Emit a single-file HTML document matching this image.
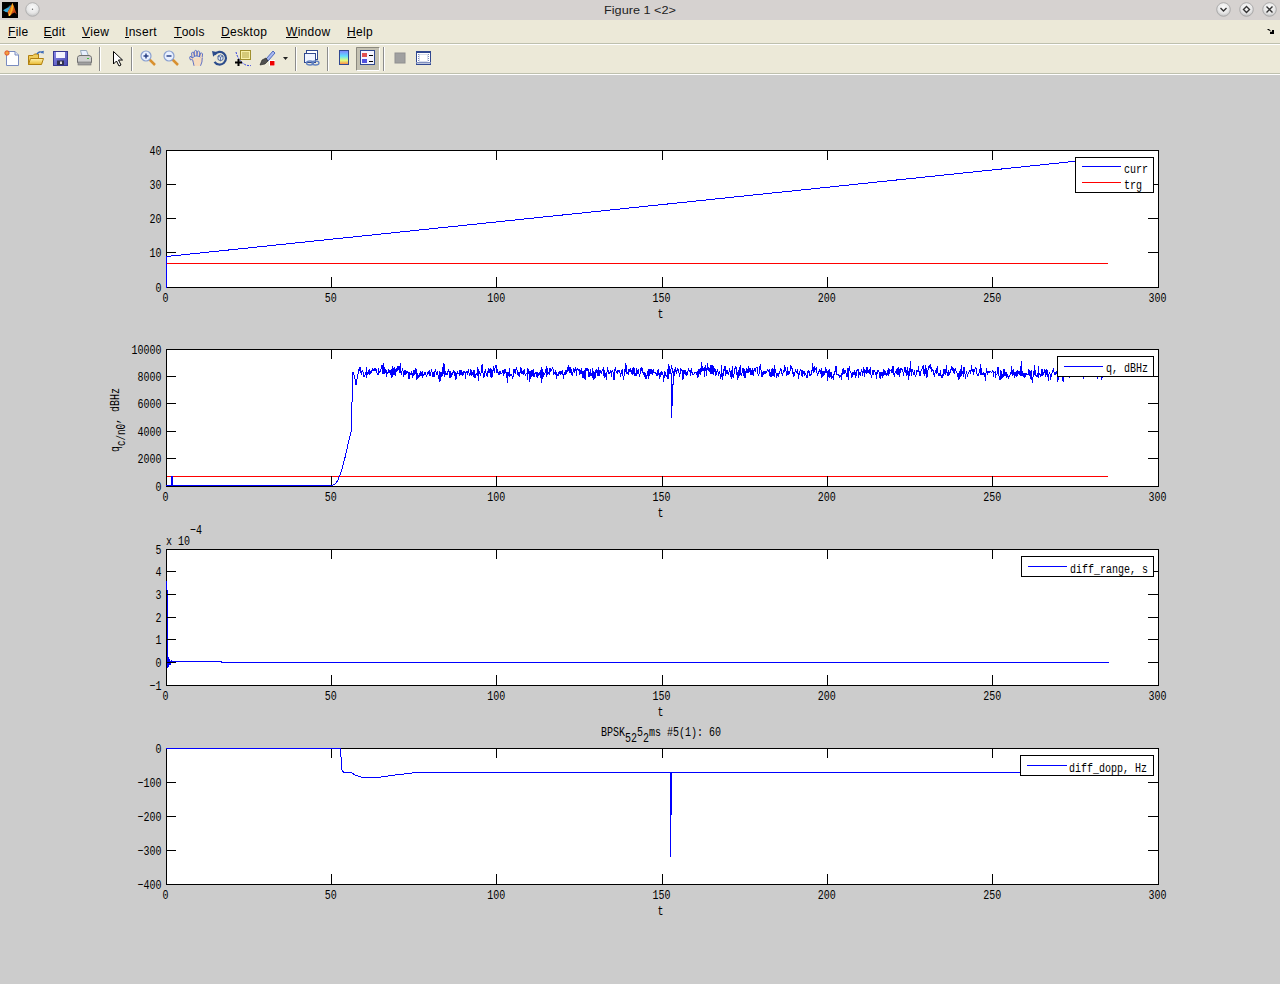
<!DOCTYPE html><html><head><meta charset="utf-8"><style>
*{margin:0;padding:0;box-sizing:border-box}
html,body{width:1280px;height:984px;overflow:hidden;background:#cccccc;font-family:"Liberation Sans",sans-serif}
#title{position:absolute;left:0;top:0;width:1280px;height:20px;background:#d6d2d0}
#menu{position:absolute;left:0;top:20px;width:1280px;height:23px;background:#ece9d8}
#menuline{position:absolute;left:0;top:43px;width:1280px;height:1px;background:#bec0ae}
#menuline2{position:absolute;left:0;top:44px;width:1280px;height:1px;background:#ffffff}
#tool{position:absolute;left:0;top:45px;width:1280px;height:28px;background:#ece9d8}
#toolline{position:absolute;left:0;top:73px;width:1280px;height:1px;background:#bec0ae}
#toolline2{position:absolute;left:0;top:74px;width:1280px;height:1px;background:#ffffff}
.mi{position:absolute;top:25px;font-size:12px;letter-spacing:0.3px;color:#000;line-height:14px;white-space:nowrap}
.mi u{text-decoration:none;position:relative}.mi u:after{content:'';position:absolute;left:0;right:0;top:12px;height:1px;background:#000}
svg{position:absolute;left:0;top:0}
</style></head><body>
<div id="title"></div><div id="menu"></div><div id="menuline"></div><div id="menuline2"></div><div id="tool"></div><div id="toolline"></div><div id="toolline2"></div>
<div class="mi" style="left:8px"><u>F</u>ile</div>
<div class="mi" style="left:43.5px"><u>E</u>dit</div>
<div class="mi" style="left:82px"><u>V</u>iew</div>
<div class="mi" style="left:125px"><u>I</u>nsert</div>
<div class="mi" style="left:174px"><u>T</u>ools</div>
<div class="mi" style="left:221px"><u>D</u>esktop</div>
<div class="mi" style="left:286px"><u>W</u>indow</div>
<div class="mi" style="left:347px"><u>H</u>elp</div>
<svg width="1280" height="984" viewBox="0 0 1280 984" font-family='"Liberation Sans", sans-serif'><defs><radialGradient id="btn" cx="50%" cy="35%" r="60%"><stop offset="0" stop-color="#fafafa"/><stop offset="0.7" stop-color="#e6e6e6"/><stop offset="1" stop-color="#c8c8c8"/></radialGradient><linearGradient id="cbar" x1="0" y1="0" x2="0" y2="1"><stop offset="0" stop-color="#8080ff"/><stop offset="0.4" stop-color="#60e0ff"/><stop offset="0.7" stop-color="#e0ff80"/><stop offset="1" stop-color="#ff8040"/></linearGradient></defs><rect x="2" y="2" width="16" height="16" fill="#000"/><linearGradient id="mlo" x1="0" y1="0" x2="1" y2="1"><stop offset="0" stop-color="#ffd040"/><stop offset="0.45" stop-color="#e86818"/><stop offset="1" stop-color="#a02010"/></linearGradient><path d="M3 10.3 L6 8.6 L8 7.4 L10.2 5.3 L11 6.2 L9.2 9.2 L7.6 12.2 L5.6 12 Z" fill="#38a8dc"/><path d="M6 8.6 L8 7.4 L10.2 5.3 L11 6.2 L9 7.5 Z" fill="#206a98"/><path d="M7.6 12.2 L9.2 9.2 L11 6.2 L12.3 3 L13.6 5.5 L15 9.6 L16.8 14.4 L14.8 12.6 L12.4 13.6 L10 16 L8.6 15.4 Z" fill="url(#mlo)"/><path d="M12.3 3 L13.3 6.5 L12.6 10.5 L11.2 13.4 L9.6 16 L8.6 15.4 L10.2 12 L11.4 7.5 Z" fill="#f8b020"/><path d="M8.6 15.4 L9.6 16 L10.6 14.2 L9.4 13.6 Z" fill="#ffe060"/><circle cx="32.5" cy="9.5" r="6.8" fill="url(#btn)" stroke="#a8a8a8" stroke-width="0.8"/><circle cx="32.5" cy="9.2" r="0.7" fill="#666"/><text x="640" y="13.5" font-size="11" text-anchor="middle" fill="#222" textLength="72" lengthAdjust="spacingAndGlyphs">Figure 1 &lt;2&gt;</text><circle cx="1223.5" cy="9.5" r="6.8" fill="url(#btn)" stroke="#a0a0a0" stroke-width="0.8"/><circle cx="1246.5" cy="9.5" r="6.8" fill="url(#btn)" stroke="#a0a0a0" stroke-width="0.8"/><circle cx="1269.5" cy="9.5" r="6.8" fill="url(#btn)" stroke="#a0a0a0" stroke-width="0.8"/><path d="M1220.5 8 L1223.5 11 L1226.5 8" fill="none" stroke="#333" stroke-width="1.4"/><path d="M1246.5 6.5 L1249.5 9.5 L1246.5 12.5 L1243.5 9.5 Z" fill="none" stroke="#333" stroke-width="1.4"/><path d="M1266.5 6.5 L1272.5 12.5 M1272.5 6.5 L1266.5 12.5" fill="none" stroke="#333" stroke-width="1.4"/><path d="M1267 29 L1269 29 L1272 32 L1272 30 L1274 30 L1274 34 L1270 34 L1270 32 L1272 32 L1268 30 Z" fill="#000"/><rect x="99" y="47" width="1" height="24" fill="#8c8c8c"/><rect x="100" y="47" width="1" height="24" fill="#fff"/><rect x="131" y="47" width="1" height="24" fill="#8c8c8c"/><rect x="132" y="47" width="1" height="24" fill="#fff"/><rect x="295" y="47" width="1" height="24" fill="#8c8c8c"/><rect x="296" y="47" width="1" height="24" fill="#fff"/><rect x="327" y="47" width="1" height="24" fill="#8c8c8c"/><rect x="328" y="47" width="1" height="24" fill="#fff"/><rect x="383" y="47" width="1" height="24" fill="#8c8c8c"/><rect x="384" y="47" width="1" height="24" fill="#fff"/><rect x="356" y="47" width="24" height="24" fill="#c4c1b2"/><path d="M356.5 70.5 V47.5 H379.5" fill="none" stroke="#8c8a80"/><path d="M356.5 70.5 H379.5 V47.5" fill="none" stroke="#fff"/><path d="M6.5 51.5 H15 L18.5 55 V65.5 H6.5 Z" fill="#fff" stroke="#7a8cc0"/><path d="M15 51.5 V55 H18.5" fill="#dfe6f5" stroke="#7a8cc0"/><circle cx="7" cy="53" r="2.2" fill="#f0a040" stroke="#e04020" stroke-width="0.8"/><linearGradient id="fold" x1="0" y1="0" x2="0" y2="1"><stop offset="0" stop-color="#fff4b0"/><stop offset="1" stop-color="#e8b830"/></linearGradient><path d="M28.5 55.5 H33 L34.5 54 H38.5 V64.5 H28.5 Z" fill="#f0cc58" stroke="#b08010"/><path d="M28.5 64.5 L30.5 58.5 H43.5 L41.5 64.5 Z" fill="url(#fold)" stroke="#b08010"/><path d="M37 54 Q39.5 50.5 42.5 53" fill="none" stroke="#3868b8" stroke-width="1.3"/><path d="M41 51.5 L43.5 54 L43.8 50.8 Z" fill="#3868b8"/><linearGradient id="sav" x1="0" y1="0" x2="1" y2="1"><stop offset="0" stop-color="#8888e8"/><stop offset="1" stop-color="#4848b0"/></linearGradient><rect x="53.5" y="51.5" width="14" height="14" fill="url(#sav)" stroke="#383890"/><rect x="56" y="52" width="9" height="6" fill="#f4f4ff"/><rect x="57" y="60.5" width="7" height="4.5" fill="#303050"/><rect x="60" y="61.5" width="2" height="2.5" fill="#e0e0e0"/><path d="M80.5 50.5 L86.5 50.5 L88.5 56 L82 56 Z" fill="#e8f0ff" stroke="#8098b0" stroke-width="0.8"/><path d="M77.5 57.5 Q78 55.5 80 55.5 H89 Q91 55.5 91.5 57.5 V62.5 H77.5 Z" fill="#d0d0d0" stroke="#707070"/><rect x="78" y="62" width="13" height="3" fill="#a0a0a0" stroke="#707070" stroke-width="0.6"/><rect x="87" y="58" width="2" height="1" fill="#40c040"/><path d="M113.5 51.5 V64 L116.5 61 L119 66 L121 65 L118.5 60 L122.5 60 Z" fill="#fff" stroke="#000" stroke-width="1"/><line x1="149" y1="59" x2="155" y2="65" stroke="#d89030" stroke-width="2.5"/><circle cx="146" cy="56" r="5" fill="#e8f0ff" stroke="#8aa0d0" stroke-width="1.2"/><path d="M143.5 56 H148.5" stroke="#203880" stroke-width="1.4"/><path d="M146 53.5 V58.5" stroke="#203880" stroke-width="1.4"/><line x1="172" y1="59" x2="178" y2="65" stroke="#d89030" stroke-width="2.5"/><circle cx="169" cy="56" r="5" fill="#e8f0ff" stroke="#8aa0d0" stroke-width="1.2"/><path d="M166.5 56 H171.5" stroke="#203880" stroke-width="1.4"/><g fill="#f6dcc0" stroke="#3858c8" stroke-width="0.8"><path d="M190.5 60 Q189 57.5 190 56.5 Q191.2 56 192.3 58 L193 59 Z"/><path d="M192 58 L191.6 53 Q192.3 51.6 193.6 52.4 L194.6 56.5 Z"/><path d="M194.4 56 L194.3 51.3 Q195.3 49.8 196.6 50.8 L197.2 56 Z"/><path d="M197 56 L197.5 51.4 Q198.8 50.4 199.7 51.8 L199.6 56.5 Z"/><path d="M199.5 57 L200.6 53.2 Q201.9 52.6 202.6 53.8 L202 58.5 Z"/><path d="M191.5 58.5 L202.3 57 Q203.3 61 201.5 63.5 L200.5 66 L194 66 Q192.5 62.5 191.5 58.5 Z" stroke="none"/><path d="M192.5 59.5 Q193.5 63 194 65.8 M202.2 58 Q202.5 62 200.5 65.8"/></g><path d="M214.6 54.5 A6.3 6.3 0 1 1 214.5 61.8" fill="none" stroke="#2c4c8c" stroke-width="2.2"/><path d="M212 51 L217.5 52.2 L213.2 56.8 Z" fill="#2c4c8c"/><path d="M218 56 L220.5 54.8 L223 56 L223 59.5 L220.5 60.8 L218 59.5 Z" fill="#e4ecf8" stroke="#2c4c8c" stroke-width="0.8"/><path d="M218 56 L220.5 57.2 L223 56 M220.5 57.2 V60.8" fill="none" stroke="#2c4c8c" stroke-width="0.7"/><rect x="240.5" y="50.5" width="10" height="9" fill="#f8f0a8" stroke="#a09030"/><path d="M242 53 H249 M242 55 H249 M242 57 H249" stroke="#a09030" stroke-width="0.8"/><path d="M236 52 Q238 60 244 64 Q247 66 251 65.5" fill="none" stroke="#2030e0" stroke-width="0.9" stroke-dasharray="2 1"/><path d="M238.5 59 V66 M235 62.5 H242" stroke="#000" stroke-width="2"/><path d="M266 59 L273 51 L275 53 L268 61 Z" fill="#a8b8f0" stroke="#3050b0" stroke-width="0.8"/><path d="M260 65 L262 60 L266 58 L268 61 L265 64 Z" fill="#505050" stroke="#202020" stroke-width="0.6"/><rect x="269" y="60" width="6" height="6" fill="#fff"/><rect x="270" y="61" width="4.5" height="4.5" fill="#ee0000"/><path d="M283 57 H288 L285.5 60 Z" fill="#222"/><rect x="306.5" y="50.5" width="11" height="9" fill="#fff" stroke="#304890"/><rect x="304.5" y="53.5" width="11" height="9" fill="#f0f4ff" stroke="#304890"/><ellipse cx="310" cy="63" rx="3.5" ry="2" fill="none" stroke="#6080c0" stroke-width="1.3"/><ellipse cx="315.5" cy="63" rx="3.5" ry="2" fill="none" stroke="#6080c0" stroke-width="1.3"/><rect x="339.5" y="50.5" width="9" height="14" fill="url(#cbar)" stroke="#304890"/><rect x="360.5" y="50.5" width="14" height="14" fill="#f4f4ff" stroke="#304890"/><rect x="362" y="53" width="5" height="4" fill="#e05050"/><rect x="362" y="59" width="5" height="4" fill="#5050e0"/><path d="M369 55.5 H373 M369 61.5 H373" stroke="#000" stroke-width="1"/><rect x="395" y="53" width="10" height="10" fill="#a0a0a0" stroke="#909090"/><rect x="416.5" y="51.5" width="14" height="13" fill="#fff" stroke="#304890"/><rect x="416" y="51" width="15" height="2" fill="#304890"/><rect x="416" y="62" width="15" height="1.5" fill="#8090c0"/><path d="M418.5 54 V62 M428.5 54 V62" stroke="#8090c0" stroke-dasharray="1 1"/><rect x="419.5" y="54.5" width="8" height="7" fill="#fff" stroke="#c0c8e0" stroke-width="0.6"/><rect x="166" y="150" width="992" height="137" fill="#fff"/><path d="M166.5 287.5 L166.5 256.5 L1108.5 157.8" fill="none" stroke="#0000ff" stroke-width="1" shape-rendering="crispEdges" stroke-linejoin="miter"/><path d="M166 263.5 H1108" stroke="#ff0000" shape-rendering="crispEdges"/><path d="M166.5 150.5 H1158.5 V287.5 H166.5 Z M166.5 288 V277 M166.5 150 V160 M331.5 288 V277 M331.5 150 V160 M496.5 288 V277 M496.5 150 V160 M662.5 288 V277 M662.5 150 V160 M827.5 288 V277 M827.5 150 V160 M992.5 288 V277 M992.5 150 V160 M1158.5 288 V277 M1158.5 150 V160 M166 252.5 H176 M1159 252.5 H1148 M166 218.5 H176 M1159 218.5 H1148 M166 184.5 H176 M1159 184.5 H1148" fill="none" stroke="#000" stroke-width="1" shape-rendering="crispEdges"/><path d="M166.5 256 V288" stroke="#0000ff" shape-rendering="crispEdges"/><text x="165.5" y="302" font-family="Liberation Mono" font-size="13" text-anchor="middle" textLength="6" lengthAdjust="spacingAndGlyphs" >0</text><text x="330.8" y="302" font-family="Liberation Mono" font-size="13" text-anchor="middle" textLength="12" lengthAdjust="spacingAndGlyphs" >50</text><text x="496.2" y="302" font-family="Liberation Mono" font-size="13" text-anchor="middle" textLength="18" lengthAdjust="spacingAndGlyphs" >100</text><text x="661.5" y="302" font-family="Liberation Mono" font-size="13" text-anchor="middle" textLength="18" lengthAdjust="spacingAndGlyphs" >150</text><text x="826.8" y="302" font-family="Liberation Mono" font-size="13" text-anchor="middle" textLength="18" lengthAdjust="spacingAndGlyphs" >200</text><text x="992.2" y="302" font-family="Liberation Mono" font-size="13" text-anchor="middle" textLength="18" lengthAdjust="spacingAndGlyphs" >250</text><text x="1157.5" y="302" font-family="Liberation Mono" font-size="13" text-anchor="middle" textLength="18" lengthAdjust="spacingAndGlyphs" >300</text><text x="161.5" y="292" font-family="Liberation Mono" font-size="13" text-anchor="end" textLength="6" lengthAdjust="spacingAndGlyphs" >0</text><text x="161.5" y="257" font-family="Liberation Mono" font-size="13" text-anchor="end" textLength="12" lengthAdjust="spacingAndGlyphs" >10</text><text x="161.5" y="223" font-family="Liberation Mono" font-size="13" text-anchor="end" textLength="12" lengthAdjust="spacingAndGlyphs" >20</text><text x="161.5" y="189" font-family="Liberation Mono" font-size="13" text-anchor="end" textLength="12" lengthAdjust="spacingAndGlyphs" >30</text><text x="161.5" y="155" font-family="Liberation Mono" font-size="13" text-anchor="end" textLength="12" lengthAdjust="spacingAndGlyphs" >40</text><text x="660.5" y="318" font-family="Liberation Mono" font-size="12" text-anchor="middle" textLength="6" lengthAdjust="spacingAndGlyphs">t</text><rect x="1075.5" y="157.5" width="78" height="35" fill="#fff" stroke="#000" shape-rendering="crispEdges"/><path d="M1082 166.5 H1121" stroke="#0000ff" shape-rendering="crispEdges"/><text x="1124" y="173" font-family="Liberation Mono" font-size="12" textLength="24" lengthAdjust="spacingAndGlyphs">curr</text><path d="M1082 182.5 H1121" stroke="#ff0000" shape-rendering="crispEdges"/><text x="1124" y="189" font-family="Liberation Mono" font-size="12" textLength="18" lengthAdjust="spacingAndGlyphs">trg</text><rect x="166" y="349" width="992" height="137" fill="#fff"/><path d="M166 476.5 H1108" stroke="#ff0000" shape-rendering="crispEdges"/><path d="M166.5 485.5 L171.5 485.5 L171.5 476.5 L172.5 476.5 L172.5 485.5 L332.0 485.5 L335.0 484.0 L337.5 481.0 L341.0 472.5 L345.0 457.5 L349.0 440.0 L351.0 432.5 L352.0 402.5 L353.0 372.5 L354.5 376.0 L356.0 385.0 L358.0 374.0 L358.5 369.0 L359.1 370.5 L359.7 370.3 L360.0 367.3 L360.8 371.7 L361.2 373.7 L361.6 374.1 L362.1 370.2 L362.7 370.1 L363.5 373.8 L363.9 376.6 L364.6 376.9 L365.4 373.0 L366.1 373.6 L366.5 367.2 L366.8 378.3 L367.2 372.6 L367.9 375.2 L368.3 369.8 L368.6 372.4 L369.4 368.9 L369.8 375.0 L370.2 371.3 L370.9 373.8 L371.2 369.9 L371.7 372.6 L372.3 369.0 L373.0 368.6 L373.7 370.5 L374.5 369.0 L374.8 370.9 L375.2 367.9 L375.6 370.7 L376.2 368.7 L376.9 373.0 L377.4 373.4 L378.0 375.3 L378.8 368.3 L379.2 372.8 L379.8 372.6 L380.4 369.8 L380.7 370.5 L381.4 366.2 L381.9 365.0 L382.4 365.5 L383.0 374.4 L383.3 362.6 L384.0 373.7 L384.5 369.4 L384.8 368.1 L385.5 370.0 L385.9 370.7 L386.3 377.4 L386.8 369.7 L387.2 373.4 L388.0 373.5 L388.3 370.1 L389.0 369.7 L389.5 372.9 L390.1 370.5 L390.9 374.9 L391.6 369.0 L391.9 378.2 L392.3 372.9 L392.9 366.2 L393.5 375.0 L393.8 371.8 L394.3 374.8 L394.9 367.5 L395.6 375.8 L396.0 372.6 L396.5 367.7 L397.2 371.2 L397.9 366.3 L398.3 366.3 L398.9 369.1 L399.6 373.0 L400.2 362.9 L400.5 370.4 L401.0 372.5 L401.7 374.1 L402.3 368.2 L403.0 370.8 L403.8 376.5 L404.5 369.6 L405.1 375.3 L405.4 372.1 L405.8 370.5 L406.1 373.9 L406.7 370.6 L407.1 373.1 L407.9 371.5 L408.4 374.2 L409.1 379.3 L409.6 372.6 L410.0 373.1 L410.6 374.0 L411.1 374.8 L411.7 370.9 L412.5 377.6 L413.2 374.7 L413.6 373.0 L414.0 370.5 L414.8 375.0 L415.3 371.7 L415.9 368.7 L416.5 369.4 L416.9 379.9 L417.6 373.3 L418.0 375.5 L418.6 377.4 L418.9 375.4 L419.3 376.1 L419.7 374.1 L420.5 371.3 L421.0 376.2 L421.7 371.9 L422.3 377.8 L422.7 371.1 L423.0 376.3 L423.5 374.9 L424.2 374.2 L425.0 372.3 L425.8 375.0 L426.2 375.1 L426.6 375.8 L427.0 375.2 L427.5 373.7 L428.3 371.9 L428.9 373.6 L429.2 369.8 L430.0 376.4 L430.5 372.4 L431.0 371.7 L431.5 368.7 L432.1 372.7 L432.4 377.2 L433.2 371.6 L434.0 376.7 L434.5 373.4 L435.3 370.0 L436.0 372.4 L436.5 374.4 L436.9 374.4 L437.3 370.6 L437.9 373.3 L438.3 378.6 L438.9 375.8 L439.5 370.6 L439.9 382.3 L440.6 373.5 L441.1 372.0 L441.5 376.1 L442.1 375.8 L442.6 366.8 L442.9 369.0 L443.3 374.1 L443.8 364.0 L444.4 364.7 L444.9 376.8 L445.2 371.0 L445.7 371.2 L446.3 374.2 L446.9 374.6 L447.6 373.9 L448.2 369.7 L448.7 371.0 L449.2 371.6 L449.7 376.3 L450.2 378.1 L450.7 370.6 L451.4 376.8 L451.8 374.9 L452.3 372.4 L452.8 375.2 L453.1 372.3 L453.6 369.6 L454.1 373.6 L454.5 376.1 L454.9 372.4 L455.7 373.2 L456.0 379.5 L456.7 373.7 L457.4 372.3 L457.8 373.4 L458.1 373.7 L458.8 373.3 L459.4 371.9 L459.8 374.9 L460.4 374.6 L460.8 369.7 L461.5 372.6 L462.2 375.5 L462.8 373.1 L463.5 374.4 L463.9 372.1 L464.2 372.6 L464.9 370.7 L465.3 378.5 L466.0 372.2 L466.3 372.2 L467.1 371.2 L467.7 375.1 L468.5 368.7 L469.2 375.0 L469.9 375.5 L470.3 369.4 L470.6 375.2 L471.1 370.3 L471.6 371.4 L471.9 375.8 L472.5 372.2 L473.2 376.7 L473.7 371.3 L474.2 369.7 L474.9 378.4 L475.5 376.5 L475.9 374.6 L476.3 374.8 L476.6 373.2 L477.1 375.6 L477.7 367.4 L478.2 380.6 L478.6 369.5 L479.2 374.1 L479.7 370.9 L480.2 375.5 L480.7 374.6 L481.3 371.1 L482.1 364.4 L482.4 366.7 L483.0 372.7 L483.7 378.1 L484.4 375.7 L484.7 370.7 L485.4 373.3 L485.7 368.7 L486.2 375.8 L486.8 374.7 L487.5 376.2 L488.3 368.4 L488.7 372.0 L489.0 373.0 L489.5 371.1 L490.1 368.5 L490.5 377.1 L491.1 372.6 L491.6 369.0 L491.9 377.8 L492.5 372.9 L493.0 369.9 L493.4 365.9 L493.8 370.7 L494.6 372.7 L495.2 365.4 L496.0 365.2 L496.6 370.9 L497.1 372.8 L497.4 369.5 L497.9 371.7 L498.4 373.2 L499.1 374.8 L499.5 373.6 L500.2 370.7 L500.9 373.7 L501.6 373.8 L502.2 372.4 L503.0 370.4 L503.8 376.0 L504.2 371.8 L504.6 372.2 L505.0 369.5 L505.5 369.6 L506.0 373.3 L506.4 378.3 L506.8 374.0 L507.1 371.9 L507.7 383.0 L508.1 373.6 L508.4 372.0 L509.0 375.7 L509.4 368.4 L509.9 376.2 L510.5 375.6 L511.1 374.3 L511.8 374.6 L512.4 379.2 L513.0 377.1 L513.3 376.0 L513.9 369.3 L514.6 372.5 L515.0 369.4 L515.6 374.3 L516.3 367.3 L516.9 369.5 L517.3 372.2 L517.8 375.3 L518.5 371.7 L519.1 376.8 L519.9 373.3 L520.2 371.4 L521.0 367.6 L521.6 373.9 L522.1 373.9 L522.9 371.8 L523.5 373.5 L524.2 369.4 L525.0 373.6 L525.3 375.3 L526.0 373.9 L526.7 373.6 L527.1 372.7 L527.4 380.1 L527.9 368.2 L528.6 373.8 L529.2 370.6 L529.9 381.5 L530.5 371.2 L531.2 371.0 L531.8 377.3 L532.2 375.1 L532.7 371.9 L533.2 369.0 L533.7 376.6 L534.1 376.4 L534.8 374.2 L535.4 372.2 L536.1 372.3 L536.7 376.3 L537.0 376.0 L537.5 377.0 L537.8 371.8 L538.3 374.4 L539.0 375.5 L539.7 371.7 L540.4 377.9 L540.8 373.9 L541.2 367.2 L541.7 383.0 L542.4 369.2 L542.9 378.5 L543.4 372.0 L544.0 375.3 L544.3 374.7 L544.8 373.1 L545.2 372.6 L545.8 369.3 L546.3 376.9 L546.9 366.4 L547.6 375.4 L548.2 373.4 L548.8 374.0 L549.2 371.2 L549.5 375.1 L550.0 368.4 L550.8 371.5 L551.3 369.3 L551.7 369.5 L552.4 367.7 L552.9 368.3 L553.6 375.3 L554.0 373.5 L554.8 372.9 L555.3 370.5 L556.1 375.1 L556.4 378.5 L556.8 373.9 L557.3 374.9 L558.1 376.0 L558.7 372.8 L559.3 371.5 L559.7 372.5 L560.0 374.0 L560.4 371.2 L560.9 374.8 L561.3 371.4 L561.7 372.7 L562.4 371.5 L562.9 373.3 L563.5 379.4 L564.3 373.2 L564.7 371.8 L565.0 375.3 L565.6 371.6 L565.9 369.8 L566.6 373.8 L567.2 370.5 L567.7 368.3 L568.1 369.5 L568.5 365.3 L569.2 372.4 L569.6 372.5 L570.0 366.8 L570.4 372.4 L570.9 372.2 L571.4 369.0 L572.1 375.7 L572.9 373.4 L573.4 368.0 L574.1 369.6 L574.5 370.9 L575.0 369.2 L575.8 367.8 L576.4 376.4 L576.9 369.1 L577.3 369.1 L577.6 368.8 L578.2 370.9 L579.0 368.9 L579.8 374.9 L580.6 371.0 L581.2 369.4 L581.8 372.0 L582.4 378.1 L583.0 370.7 L583.6 374.8 L584.2 378.8 L584.9 369.8 L585.2 379.9 L585.6 375.2 L586.0 368.3 L586.3 368.2 L587.1 371.3 L587.6 367.8 L588.3 370.4 L589.0 376.4 L589.5 375.6 L589.9 372.8 L590.6 369.2 L590.9 376.4 L591.4 374.6 L591.9 374.7 L592.3 367.9 L592.9 377.3 L593.4 378.3 L593.9 370.6 L594.5 378.4 L595.3 377.0 L596.0 370.2 L596.3 373.0 L596.8 368.8 L597.5 373.5 L598.1 376.1 L598.7 366.9 L599.5 375.5 L600.2 371.9 L600.7 369.9 L601.1 373.0 L601.7 373.0 L602.4 369.5 L603.0 370.5 L603.3 366.7 L603.6 375.8 L604.0 369.9 L604.4 371.7 L604.9 377.7 L605.4 373.3 L606.0 373.4 L606.7 379.7 L607.2 367.5 L607.7 372.3 L608.4 370.3 L608.7 374.2 L609.3 371.7 L609.7 374.2 L610.1 372.2 L610.9 369.9 L611.4 376.5 L611.9 372.6 L612.4 371.3 L612.7 369.9 L613.2 373.0 L613.7 376.8 L614.0 380.3 L614.4 370.2 L614.8 370.3 L615.2 368.5 L615.6 367.8 L616.2 372.0 L616.6 372.3 L616.9 372.7 L617.3 371.8 L617.7 374.4 L618.3 370.0 L619.0 372.1 L619.7 370.1 L620.4 376.7 L621.1 373.9 L621.8 371.2 L622.5 368.8 L623.1 377.1 L623.5 379.6 L624.0 376.4 L624.4 368.7 L625.1 371.6 L625.8 363.2 L626.3 367.6 L626.9 372.9 L627.5 372.4 L628.2 374.1 L628.9 369.2 L629.3 371.1 L629.8 370.8 L630.2 367.6 L630.6 371.5 L631.1 371.4 L631.6 373.6 L632.4 367.7 L632.8 373.8 L633.3 373.3 L634.0 367.4 L634.3 372.8 L635.0 375.4 L635.3 373.2 L635.7 375.5 L636.1 375.5 L636.7 368.0 L637.2 374.1 L637.8 371.5 L638.2 368.8 L638.9 373.4 L639.7 375.7 L640.1 373.7 L640.8 369.8 L641.2 367.3 L642.0 371.1 L642.3 367.6 L643.1 373.2 L643.7 374.7 L644.0 372.0 L644.5 377.1 L644.9 375.5 L645.6 373.4 L646.0 378.7 L646.8 375.8 L647.6 374.6 L648.2 369.4 L648.5 379.2 L649.0 376.2 L649.5 371.9 L650.0 369.3 L650.6 372.2 L651.0 374.0 L651.4 368.9 L652.0 372.5 L652.3 371.8 L652.7 373.6 L653.2 372.4 L653.6 370.9 L654.3 372.5 L654.7 372.8 L655.3 372.6 L656.0 373.4 L656.6 374.2 L657.1 376.0 L657.5 370.5 L657.9 370.8 L658.6 370.1 L659.4 378.7 L660.1 371.7 L660.6 377.1 L661.2 370.8 L661.8 375.0 L662.6 372.0 L663.2 376.6 L663.8 382.4 L664.1 376.4 L664.6 370.8 L664.9 375.8 L665.3 375.1 L665.6 372.2 L666.4 376.9 L667.0 376.9 L667.4 368.9 L668.0 379.2 L668.6 365.8 L669.2 367.0 L669.9 373.7 L670.6 373.7 L670.9 369.9 L671.6 365.5 L672.1 369.0 L672.4 373.2 L672.8 370.5 L673.2 372.0 L673.5 375.4 L674.0 371.8 L674.4 375.6 L675.2 366.8 L675.6 369.4 L676.3 373.7 L676.6 371.2 L677.3 369.9 L677.9 368.2 L678.7 371.2 L679.1 373.0 L679.8 376.6 L680.5 368.2 L681.0 371.2 L681.5 370.7 L681.9 369.7 L682.3 371.0 L682.8 378.6 L683.6 377.7 L684.0 370.5 L684.7 374.0 L685.2 374.1 L685.8 370.2 L686.4 375.6 L686.7 375.5 L687.3 373.7 L687.8 371.8 L688.5 368.1 L689.3 371.2 L690.1 372.0 L690.4 376.1 L691.0 369.8 L691.7 369.0 L692.0 372.7 L692.3 373.0 L692.9 374.8 L693.5 374.5 L694.1 374.0 L694.5 372.5 L695.0 372.6 L695.7 372.1 L696.5 374.0 L697.2 371.5 L698.0 377.5 L698.5 374.1 L698.9 368.8 L699.6 371.9 L700.2 375.3 L700.8 372.8 L701.3 362.0 L701.9 371.5 L702.6 366.4 L703.3 369.8 L703.7 367.9 L704.5 376.9 L705.1 365.0 L705.7 365.2 L706.3 375.9 L706.8 371.0 L707.3 363.1 L707.9 370.1 L708.5 368.4 L709.2 372.2 L709.7 368.2 L710.5 374.3 L711.0 365.1 L711.5 373.0 L711.8 373.1 L712.2 365.2 L712.6 371.9 L713.3 374.9 L713.6 365.6 L714.2 368.7 L714.7 371.7 L715.4 368.9 L715.8 375.6 L716.6 373.9 L717.3 369.1 L717.7 369.4 L718.5 374.9 L719.1 374.0 L719.9 370.8 L720.2 378.9 L720.9 378.0 L721.5 372.4 L721.8 364.6 L722.2 379.7 L722.6 373.9 L723.3 376.3 L724.0 369.2 L724.4 369.9 L725.0 366.2 L725.7 374.1 L726.3 372.9 L726.8 370.6 L727.3 372.3 L727.7 369.8 L728.1 375.2 L728.6 372.2 L729.1 371.9 L729.8 368.3 L730.3 373.7 L730.9 376.5 L731.6 378.5 L732.2 365.7 L732.8 375.9 L733.4 378.1 L734.2 372.5 L734.5 371.6 L735.0 368.5 L735.6 366.7 L736.4 367.1 L736.9 374.0 L737.6 379.7 L738.1 370.3 L738.4 371.3 L738.8 377.8 L739.5 371.1 L740.2 365.0 L740.5 374.1 L740.9 374.2 L741.5 376.4 L742.1 372.0 L742.7 368.7 L743.0 368.0 L743.5 374.0 L743.9 375.2 L744.2 374.7 L744.7 368.8 L745.0 378.0 L745.6 372.0 L746.1 372.5 L746.8 367.7 L747.5 371.3 L748.3 373.1 L748.8 366.1 L749.3 370.5 L750.0 371.7 L750.4 374.7 L750.8 367.6 L751.5 374.3 L751.9 374.2 L752.5 367.7 L753.0 374.9 L753.5 375.0 L754.2 368.1 L754.6 370.7 L755.3 371.1 L755.8 368.9 L756.3 367.6 L757.0 367.2 L757.5 371.9 L758.2 374.9 L758.9 375.8 L759.5 367.8 L760.3 364.3 L760.9 368.0 L761.4 376.2 L762.1 376.5 L762.7 373.6 L763.4 370.9 L764.0 374.5 L764.3 373.0 L765.1 370.7 L765.6 373.9 L765.9 370.7 L766.3 372.3 L767.1 371.2 L767.5 369.4 L767.8 369.7 L768.4 372.2 L769.1 369.5 L769.4 375.7 L770.2 371.7 L770.6 374.6 L771.0 376.9 L771.3 373.8 L771.7 369.0 L772.0 374.4 L772.5 374.9 L772.8 369.2 L773.3 370.1 L774.1 376.5 L774.6 365.0 L775.0 373.4 L775.5 370.2 L775.9 370.9 L776.3 377.8 L776.9 376.6 L777.7 373.4 L778.2 376.7 L778.9 374.0 L779.4 371.9 L779.9 371.1 L780.6 368.9 L781.4 369.9 L781.8 373.3 L782.5 374.9 L782.8 375.1 L783.2 370.4 L783.8 372.8 L784.4 369.6 L784.7 365.5 L785.5 370.4 L785.9 369.9 L786.2 372.9 L786.8 376.0 L787.2 371.5 L787.6 367.5 L788.0 375.0 L788.6 370.9 L789.0 373.5 L789.4 371.2 L789.8 374.2 L790.5 364.6 L791.3 368.1 L791.9 366.1 L792.3 374.3 L792.9 371.6 L793.4 372.3 L793.8 375.7 L794.5 374.7 L795.0 372.5 L795.6 369.4 L796.1 371.6 L796.7 372.3 L797.4 369.2 L798.0 374.4 L798.4 372.9 L798.7 378.8 L799.2 372.4 L799.9 371.2 L800.7 369.7 L801.2 370.3 L801.9 375.3 L802.3 376.7 L802.9 370.5 L803.4 373.8 L804.1 371.4 L804.6 376.4 L805.2 373.9 L806.0 374.5 L806.5 377.7 L807.3 377.7 L807.6 372.1 L808.1 372.8 L808.9 370.6 L809.6 374.9 L810.2 374.2 L810.7 375.4 L811.2 375.0 L811.8 371.0 L812.1 370.5 L812.8 363.5 L813.4 372.3 L814.0 371.9 L814.5 366.0 L815.2 368.6 L815.8 370.2 L816.1 366.7 L816.9 373.0 L817.6 375.9 L818.3 371.9 L819.1 372.0 L819.8 369.5 L820.4 370.9 L821.0 373.4 L821.4 368.4 L821.9 378.2 L822.4 374.8 L823.0 371.0 L823.7 376.2 L824.3 371.4 L824.7 373.6 L825.4 372.7 L825.8 366.8 L826.2 372.9 L826.7 368.9 L827.2 373.0 L827.8 381.4 L828.2 373.3 L828.9 370.6 L829.2 369.0 L829.6 377.7 L830.3 375.8 L830.9 372.6 L831.3 372.8 L831.8 379.3 L832.4 375.8 L832.8 377.7 L833.5 379.0 L834.1 373.2 L834.5 374.0 L835.2 370.5 L836.0 365.6 L836.3 371.1 L836.9 374.3 L837.5 374.1 L838.2 374.7 L838.7 375.3 L839.5 376.2 L839.8 377.4 L840.4 376.2 L841.2 377.4 L841.5 379.9 L842.1 372.4 L842.4 374.8 L843.1 368.2 L843.8 373.3 L844.5 373.1 L845.1 369.8 L845.9 372.4 L846.4 375.3 L846.8 377.2 L847.4 368.4 L848.2 380.1 L848.7 374.7 L849.1 365.7 L849.9 370.4 L850.2 372.9 L850.9 372.1 L851.6 378.2 L852.1 372.4 L852.8 376.9 L853.2 373.6 L854.0 372.7 L854.3 369.8 L854.8 375.1 L855.1 372.5 L855.9 377.7 L856.2 373.5 L856.6 370.3 L857.3 370.1 L858.1 369.7 L858.4 378.0 L858.8 375.4 L859.2 375.1 L859.8 371.9 L860.1 374.5 L860.8 375.7 L861.1 370.6 L861.9 369.7 L862.4 375.9 L863.1 372.3 L863.9 366.9 L864.6 377.4 L865.0 373.0 L865.8 370.2 L866.4 374.1 L867.0 367.1 L867.4 370.3 L868.1 372.8 L868.9 370.2 L869.2 368.7 L869.6 374.4 L870.3 367.5 L870.9 375.1 L871.5 376.9 L872.0 375.5 L872.7 371.1 L873.0 369.9 L873.4 374.1 L873.7 374.3 L874.3 370.7 L874.8 370.3 L875.4 374.9 L876.1 373.1 L876.4 372.9 L876.8 379.0 L877.1 372.4 L877.9 370.8 L878.3 370.9 L879.0 371.8 L879.6 378.4 L879.9 375.3 L880.3 372.3 L880.7 379.1 L881.4 373.3 L882.0 372.0 L882.6 378.1 L883.3 374.1 L883.8 370.2 L884.4 371.3 L885.0 374.6 L885.7 372.3 L886.3 373.5 L886.6 375.6 L887.0 375.3 L887.6 370.1 L888.2 376.2 L888.7 368.3 L889.3 370.2 L889.7 373.5 L890.1 370.0 L890.9 370.1 L891.2 368.9 L891.9 373.3 L892.6 369.2 L892.9 365.9 L893.7 370.6 L894.2 377.0 L894.8 374.9 L895.2 371.3 L895.9 372.6 L896.3 373.7 L896.7 369.6 L897.4 368.7 L898.0 374.6 L898.3 367.3 L898.7 374.1 L899.3 375.2 L900.0 368.7 L900.5 373.1 L901.0 368.6 L901.5 368.8 L902.1 370.3 L902.8 369.6 L903.2 374.0 L903.5 375.7 L903.8 372.8 L904.2 371.7 L905.0 366.6 L905.4 373.0 L906.1 370.4 L906.8 374.7 L907.3 374.3 L907.7 366.6 L908.5 379.6 L909.0 371.6 L909.4 371.0 L909.8 376.4 L910.2 361.0 L910.7 368.6 L911.4 375.8 L911.7 369.9 L912.2 369.4 L912.9 371.8 L913.4 374.2 L914.1 374.4 L914.6 370.5 L915.1 375.7 L915.6 376.0 L916.3 373.6 L916.6 370.9 L917.4 370.9 L918.0 372.2 L918.3 367.1 L918.6 366.9 L919.3 373.1 L920.0 376.1 L920.6 371.7 L921.0 370.8 L921.6 369.1 L922.4 368.8 L923.1 365.5 L923.5 374.1 L924.1 369.3 L924.5 375.5 L925.0 373.9 L925.6 365.2 L926.3 370.8 L926.9 376.9 L927.5 376.5 L928.0 369.8 L928.4 365.6 L928.7 370.4 L929.3 365.2 L930.1 368.5 L930.7 364.0 L931.4 370.8 L932.0 371.4 L932.6 370.2 L932.9 369.6 L933.7 373.9 L934.3 375.7 L934.9 373.3 L935.4 370.2 L936.0 373.2 L936.4 373.6 L937.2 366.4 L937.7 372.4 L938.1 373.2 L938.5 375.9 L939.2 374.0 L939.6 374.7 L940.1 372.7 L940.5 370.4 L941.2 378.0 L941.9 375.5 L942.5 375.0 L942.9 378.2 L943.3 368.9 L943.7 374.5 L944.3 368.7 L944.7 372.1 L945.0 371.5 L945.4 374.6 L945.8 371.5 L946.4 365.4 L947.1 373.7 L947.4 376.0 L948.2 370.4 L948.8 376.4 L949.4 373.3 L950.1 372.6 L950.7 369.3 L951.2 369.6 L951.5 366.2 L952.2 371.4 L952.7 366.7 L953.1 368.2 L953.7 372.4 L954.2 372.8 L954.7 369.5 L955.1 370.6 L955.4 370.8 L955.7 368.0 L956.1 371.9 L956.6 372.7 L957.1 373.4 L957.8 376.8 L958.4 372.8 L958.7 380.1 L959.5 376.1 L960.3 368.7 L960.7 377.4 L961.1 375.5 L961.5 364.7 L962.1 371.7 L962.7 371.4 L963.4 377.1 L964.0 366.9 L964.7 370.3 L965.2 376.8 L965.6 378.5 L966.3 370.8 L966.9 373.9 L967.6 376.5 L968.2 372.6 L968.6 373.2 L969.4 370.9 L970.0 370.5 L970.8 373.5 L971.6 365.1 L972.3 371.0 L972.7 372.1 L973.0 368.6 L973.3 369.4 L973.7 374.5 L974.3 369.0 L974.8 369.2 L975.4 367.8 L976.2 368.9 L976.8 373.6 L977.5 376.3 L978.0 373.7 L978.4 374.8 L979.1 373.1 L979.6 370.1 L980.1 369.6 L980.4 363.6 L981.0 375.1 L981.7 368.5 L982.1 373.9 L982.8 374.6 L983.2 372.1 L983.8 374.6 L984.4 375.6 L984.8 373.5 L985.4 380.8 L985.8 374.8 L986.4 368.6 L986.9 370.7 L987.7 373.5 L988.3 371.6 L989.0 372.8 L989.6 372.0 L990.2 371.4 L990.8 371.8 L991.4 372.3 L991.9 372.3 L992.4 370.5 L993.0 371.3 L993.5 377.0 L994.0 372.7 L994.7 372.7 L995.2 371.1 L995.6 377.5 L996.1 373.9 L996.8 374.7 L997.3 373.6 L998.0 366.8 L998.5 373.0 L999.1 376.5 L999.5 379.0 L1000.2 379.3 L1000.7 371.6 L1001.0 370.5 L1001.8 378.7 L1002.6 375.3 L1003.3 377.3 L1004.0 369.0 L1004.3 372.4 L1005.0 375.6 L1005.7 372.8 L1006.4 372.3 L1006.7 376.1 L1007.2 375.0 L1007.9 376.9 L1008.4 378.2 L1009.1 376.1 L1009.4 375.8 L1009.8 376.9 L1010.3 372.5 L1010.9 371.9 L1011.4 374.4 L1011.7 365.7 L1012.5 376.0 L1013.2 369.5 L1014.0 375.2 L1014.6 377.7 L1014.9 371.7 L1015.4 375.6 L1015.8 372.1 L1016.1 376.7 L1016.8 372.2 L1017.2 370.3 L1017.6 375.6 L1018.3 372.8 L1018.8 370.7 L1019.2 374.9 L1019.8 373.0 L1020.2 368.4 L1020.5 375.5 L1021.3 361.0 L1021.7 375.7 L1022.0 371.2 L1022.6 374.8 L1023.2 373.6 L1023.9 377.2 L1024.6 372.6 L1025.0 377.6 L1025.4 373.7 L1026.0 373.5 L1026.6 374.5 L1027.3 374.4 L1028.0 374.9 L1028.7 369.3 L1029.3 370.9 L1029.7 374.1 L1030.4 378.5 L1031.0 371.3 L1031.5 370.6 L1032.2 383.0 L1032.8 377.7 L1033.6 373.6 L1034.1 370.4 L1034.6 365.2 L1035.0 375.1 L1035.4 369.6 L1036.1 376.6 L1036.8 375.3 L1037.2 376.0 L1037.8 373.0 L1038.2 378.1 L1038.6 365.7 L1038.9 372.4 L1039.4 374.0 L1039.9 375.0 L1040.3 376.1 L1041.0 374.2 L1041.3 368.7 L1041.7 375.9 L1042.2 369.4 L1042.6 376.4 L1043.0 372.7 L1043.6 374.0 L1044.4 371.1 L1045.0 369.3 L1045.3 376.5 L1046.1 369.2 L1046.7 373.6 L1047.3 377.0 L1047.7 370.3 L1048.4 380.7 L1048.9 375.1 L1049.2 372.9 L1049.9 372.4 L1050.4 380.2 L1051.1 376.9 L1051.6 373.7 L1052.1 373.0 L1052.9 370.9 L1053.5 369.5 L1054.3 373.6 L1055.0 374.8 L1055.8 372.4 L1056.5 373.2 L1057.2 370.9 L1057.8 380.2 L1058.4 379.3 L1059.2 367.4 L1059.7 376.2 L1060.1 373.4 L1060.4 374.2 L1061.1 372.0 L1061.6 377.4 L1062.3 370.9 L1063.1 382.3 L1063.8 376.6 L1064.3 363.7 L1065.0 374.0 L1065.7 373.7 L1066.2 376.4 L1066.9 377.1 L1067.6 375.4 L1068.0 376.6 L1068.6 373.7 L1069.1 373.3 L1069.6 373.0 L1069.9 377.9 L1070.4 374.3 L1071.0 369.9 L1071.5 372.1 L1072.0 372.8 L1072.7 369.9 L1073.5 375.2 L1074.1 369.7 L1074.8 371.6 L1075.4 377.3 L1075.9 375.4 L1076.6 372.5 L1077.0 374.2 L1077.8 371.5 L1078.4 371.2 L1078.9 367.4 L1079.5 375.8 L1080.1 371.1 L1080.7 376.3 L1081.2 371.2 L1081.8 372.5 L1082.2 369.9 L1083.0 372.9 L1083.6 379.1 L1083.9 369.1 L1084.6 368.0 L1085.0 372.1 L1085.8 366.4 L1086.3 367.8 L1087.0 368.3 L1087.6 367.4 L1088.3 369.2 L1089.0 370.3 L1089.4 369.9 L1089.8 375.7 L1090.5 366.7 L1091.0 369.3 L1091.7 370.5 L1092.1 375.2 L1092.5 368.9 L1093.1 367.2 L1093.7 368.1 L1094.1 373.7 L1094.5 371.7 L1095.1 372.3 L1095.7 374.7 L1096.4 373.4 L1097.2 375.6 L1097.8 379.2 L1098.5 372.8 L1099.0 373.3 L1099.5 374.3 L1100.1 376.3 L1100.7 369.0 L1101.4 374.8 L1101.9 379.5 L1102.5 371.8 L1102.9 370.8 L1103.6 375.0 L1104.1 371.8 L1104.5 375.8 L1105.0 368.7 L1105.7 372.6 L1106.4 371.5 L1106.7 372.6 L1107.2 371.1 L1107.8 374.3 L1108.3 373.5" fill="none" stroke="#0000ff" stroke-width="1" shape-rendering="crispEdges" stroke-linejoin="miter"/><path d="M672.5 373 V384" stroke="#fff" shape-rendering="crispEdges"/><path d="M671.5 373 V418" stroke="#0000ff" shape-rendering="crispEdges"/><path d="M672.5 384 V406" stroke="#0000ff" shape-rendering="crispEdges"/><path d="M673.5 372 V385" stroke="#0000ff" shape-rendering="crispEdges"/><path d="M166.5 349.5 H1158.5 V486.5 H166.5 Z M166.5 487 V476 M166.5 349 V359 M331.5 487 V476 M331.5 349 V359 M496.5 487 V476 M496.5 349 V359 M662.5 487 V476 M662.5 349 V359 M827.5 487 V476 M827.5 349 V359 M992.5 487 V476 M992.5 349 V359 M1158.5 487 V476 M1158.5 349 V359 M166 458.5 H176 M1159 458.5 H1148 M166 431.5 H176 M1159 431.5 H1148 M166 403.5 H176 M1159 403.5 H1148 M166 376.5 H176 M1159 376.5 H1148" fill="none" stroke="#000" stroke-width="1" shape-rendering="crispEdges"/><path d="M166 485.5 H332" stroke="#0000ff" shape-rendering="crispEdges"/><text x="165.5" y="501" font-family="Liberation Mono" font-size="13" text-anchor="middle" textLength="6" lengthAdjust="spacingAndGlyphs" >0</text><text x="330.8" y="501" font-family="Liberation Mono" font-size="13" text-anchor="middle" textLength="12" lengthAdjust="spacingAndGlyphs" >50</text><text x="496.2" y="501" font-family="Liberation Mono" font-size="13" text-anchor="middle" textLength="18" lengthAdjust="spacingAndGlyphs" >100</text><text x="661.5" y="501" font-family="Liberation Mono" font-size="13" text-anchor="middle" textLength="18" lengthAdjust="spacingAndGlyphs" >150</text><text x="826.8" y="501" font-family="Liberation Mono" font-size="13" text-anchor="middle" textLength="18" lengthAdjust="spacingAndGlyphs" >200</text><text x="992.2" y="501" font-family="Liberation Mono" font-size="13" text-anchor="middle" textLength="18" lengthAdjust="spacingAndGlyphs" >250</text><text x="1157.5" y="501" font-family="Liberation Mono" font-size="13" text-anchor="middle" textLength="18" lengthAdjust="spacingAndGlyphs" >300</text><text x="161.5" y="491" font-family="Liberation Mono" font-size="13" text-anchor="end" textLength="6" lengthAdjust="spacingAndGlyphs" >0</text><text x="161.5" y="463" font-family="Liberation Mono" font-size="13" text-anchor="end" textLength="24" lengthAdjust="spacingAndGlyphs" >2000</text><text x="161.5" y="436" font-family="Liberation Mono" font-size="13" text-anchor="end" textLength="24" lengthAdjust="spacingAndGlyphs" >4000</text><text x="161.5" y="408" font-family="Liberation Mono" font-size="13" text-anchor="end" textLength="24" lengthAdjust="spacingAndGlyphs" >6000</text><text x="161.5" y="381" font-family="Liberation Mono" font-size="13" text-anchor="end" textLength="24" lengthAdjust="spacingAndGlyphs" >8000</text><text x="161.5" y="354" font-family="Liberation Mono" font-size="13" text-anchor="end" textLength="30" lengthAdjust="spacingAndGlyphs" >10000</text><text x="660.5" y="517" font-family="Liberation Mono" font-size="12" text-anchor="middle" textLength="6" lengthAdjust="spacingAndGlyphs">t</text><rect x="1057.5" y="356.5" width="96" height="20" fill="#fff" stroke="#000" shape-rendering="crispEdges"/><path d="M1064 366.5 H1103" stroke="#0000ff" shape-rendering="crispEdges"/><text x="1106" y="372" font-family="Liberation Mono" font-size="12" textLength="42" lengthAdjust="spacingAndGlyphs">q, dBHz</text><g transform="translate(119,452) rotate(-90)"><text x="0" y="0" font-family="Liberation Mono" font-size="13" textLength="64" lengthAdjust="spacingAndGlyphs">q<tspan font-size="12" dy="6">c/n0</tspan><tspan dy="-6" font-size="13">, dBHz</tspan></text></g><rect x="166" y="549" width="992" height="136" fill="#fff"/><path d="M166.5 581.0 L166.5 590.0 L167.5 590.0 L167.5 655.0 L168.0 668.0 L168.5 657.0 L169.0 665.0 L169.5 659.5 L170.5 663.5 L171.5 661.0 L173.0 662.0 L221.5 661.5 L222.0 662.5 L1108.5 662.5" fill="none" stroke="#0000ff" stroke-width="1" shape-rendering="crispEdges" stroke-linejoin="miter"/><path d="M166.5 549.5 H1158.5 V685.5 H166.5 Z M166.5 686 V675 M166.5 549 V559 M331.5 686 V675 M331.5 549 V559 M496.5 686 V675 M496.5 549 V559 M662.5 686 V675 M662.5 549 V559 M827.5 686 V675 M827.5 549 V559 M992.5 686 V675 M992.5 549 V559 M1158.5 686 V675 M1158.5 549 V559 M166 662.5 H176 M1159 662.5 H1148 M166 639.5 H176 M1159 639.5 H1148 M166 617.5 H176 M1159 617.5 H1148 M166 594.5 H176 M1159 594.5 H1148 M166 571.5 H176 M1159 571.5 H1148" fill="none" stroke="#000" stroke-width="1" shape-rendering="crispEdges"/><path d="M166.5 581 V590" stroke="#0000ff" shape-rendering="crispEdges"/><text x="165.5" y="700" font-family="Liberation Mono" font-size="13" text-anchor="middle" textLength="6" lengthAdjust="spacingAndGlyphs" >0</text><text x="330.8" y="700" font-family="Liberation Mono" font-size="13" text-anchor="middle" textLength="12" lengthAdjust="spacingAndGlyphs" >50</text><text x="496.2" y="700" font-family="Liberation Mono" font-size="13" text-anchor="middle" textLength="18" lengthAdjust="spacingAndGlyphs" >100</text><text x="661.5" y="700" font-family="Liberation Mono" font-size="13" text-anchor="middle" textLength="18" lengthAdjust="spacingAndGlyphs" >150</text><text x="826.8" y="700" font-family="Liberation Mono" font-size="13" text-anchor="middle" textLength="18" lengthAdjust="spacingAndGlyphs" >200</text><text x="992.2" y="700" font-family="Liberation Mono" font-size="13" text-anchor="middle" textLength="18" lengthAdjust="spacingAndGlyphs" >250</text><text x="1157.5" y="700" font-family="Liberation Mono" font-size="13" text-anchor="middle" textLength="18" lengthAdjust="spacingAndGlyphs" >300</text><text x="161.5" y="690" font-family="Liberation Mono" font-size="13" text-anchor="end" textLength="12" lengthAdjust="spacingAndGlyphs" >&#8722;1</text><text x="161.5" y="667" font-family="Liberation Mono" font-size="13" text-anchor="end" textLength="6" lengthAdjust="spacingAndGlyphs" >0</text><text x="161.5" y="644" font-family="Liberation Mono" font-size="13" text-anchor="end" textLength="6" lengthAdjust="spacingAndGlyphs" >1</text><text x="161.5" y="622" font-family="Liberation Mono" font-size="13" text-anchor="end" textLength="6" lengthAdjust="spacingAndGlyphs" >2</text><text x="161.5" y="599" font-family="Liberation Mono" font-size="13" text-anchor="end" textLength="6" lengthAdjust="spacingAndGlyphs" >3</text><text x="161.5" y="576" font-family="Liberation Mono" font-size="13" text-anchor="end" textLength="6" lengthAdjust="spacingAndGlyphs" >4</text><text x="161.5" y="554" font-family="Liberation Mono" font-size="13" text-anchor="end" textLength="6" lengthAdjust="spacingAndGlyphs" >5</text><text x="660.5" y="716" font-family="Liberation Mono" font-size="12" text-anchor="middle" textLength="6" lengthAdjust="spacingAndGlyphs">t</text><rect x="1021.5" y="556.5" width="132" height="20" fill="#fff" stroke="#000" shape-rendering="crispEdges"/><path d="M1028 566.5 H1067" stroke="#0000ff" shape-rendering="crispEdges"/><text x="1070" y="573" font-family="Liberation Mono" font-size="12" textLength="78" lengthAdjust="spacingAndGlyphs">diff_range, s</text><text x="166" y="545" font-family="Liberation Mono" font-size="13" text-anchor="start" textLength="24" lengthAdjust="spacingAndGlyphs" >x 10</text><text x="190" y="534" font-family="Liberation Mono" font-size="13" text-anchor="start" textLength="12" lengthAdjust="spacingAndGlyphs" >&#8722;4</text><rect x="166" y="748" width="992" height="136" fill="#fff"/><path d="M166.5 748.5 H1158.5 V884.5 H166.5 Z M166.5 885 V874 M166.5 748 V758 M331.5 885 V874 M331.5 748 V758 M496.5 885 V874 M496.5 748 V758 M662.5 885 V874 M662.5 748 V758 M827.5 885 V874 M827.5 748 V758 M992.5 885 V874 M992.5 748 V758 M1158.5 885 V874 M1158.5 748 V758 M166 850.5 H176 M1159 850.5 H1148 M166 816.5 H176 M1159 816.5 H1148 M166 782.5 H176 M1159 782.5 H1148" fill="none" stroke="#000" stroke-width="1" shape-rendering="crispEdges"/><path d="M166.0 748.5 L340.5 748.5 L341.5 765.0 L342.0 770.0 L344.0 773.0 L346.0 772.5 L351.0 772.5 L355.0 775.0 L362.0 777.5 L378.0 777.5 L395.0 775.0 L408.0 773.5 L416.0 772.5 L1108.5 772.5" fill="none" stroke="#0000ff" stroke-width="1" shape-rendering="crispEdges" stroke-linejoin="miter"/><path d="M670.5 772 V857" stroke="#0000ff" shape-rendering="crispEdges"/><path d="M671.5 772 V815" stroke="#0000ff" shape-rendering="crispEdges"/><text x="165.5" y="899" font-family="Liberation Mono" font-size="13" text-anchor="middle" textLength="6" lengthAdjust="spacingAndGlyphs" >0</text><text x="330.8" y="899" font-family="Liberation Mono" font-size="13" text-anchor="middle" textLength="12" lengthAdjust="spacingAndGlyphs" >50</text><text x="496.2" y="899" font-family="Liberation Mono" font-size="13" text-anchor="middle" textLength="18" lengthAdjust="spacingAndGlyphs" >100</text><text x="661.5" y="899" font-family="Liberation Mono" font-size="13" text-anchor="middle" textLength="18" lengthAdjust="spacingAndGlyphs" >150</text><text x="826.8" y="899" font-family="Liberation Mono" font-size="13" text-anchor="middle" textLength="18" lengthAdjust="spacingAndGlyphs" >200</text><text x="992.2" y="899" font-family="Liberation Mono" font-size="13" text-anchor="middle" textLength="18" lengthAdjust="spacingAndGlyphs" >250</text><text x="1157.5" y="899" font-family="Liberation Mono" font-size="13" text-anchor="middle" textLength="18" lengthAdjust="spacingAndGlyphs" >300</text><text x="161.5" y="889" font-family="Liberation Mono" font-size="13" text-anchor="end" textLength="24" lengthAdjust="spacingAndGlyphs" >&#8722;400</text><text x="161.5" y="855" font-family="Liberation Mono" font-size="13" text-anchor="end" textLength="24" lengthAdjust="spacingAndGlyphs" >&#8722;300</text><text x="161.5" y="821" font-family="Liberation Mono" font-size="13" text-anchor="end" textLength="24" lengthAdjust="spacingAndGlyphs" >&#8722;200</text><text x="161.5" y="787" font-family="Liberation Mono" font-size="13" text-anchor="end" textLength="24" lengthAdjust="spacingAndGlyphs" >&#8722;100</text><text x="161.5" y="753" font-family="Liberation Mono" font-size="13" text-anchor="end" textLength="6" lengthAdjust="spacingAndGlyphs" >0</text><text x="660.5" y="915" font-family="Liberation Mono" font-size="12" text-anchor="middle" textLength="6" lengthAdjust="spacingAndGlyphs">t</text><rect x="1020.5" y="755.5" width="133" height="20" fill="#fff" stroke="#000" shape-rendering="crispEdges"/><path d="M1027 765.5 H1067" stroke="#0000ff" shape-rendering="crispEdges"/><text x="1069" y="772" font-family="Liberation Mono" font-size="12" textLength="78" lengthAdjust="spacingAndGlyphs">diff_dopp, Hz</text><text x="601" y="736" font-family="Liberation Mono" font-size="13" textLength="24" lengthAdjust="spacingAndGlyphs">BPSK</text><text x="625" y="742" font-family="Liberation Mono" font-size="13" textLength="12" lengthAdjust="spacingAndGlyphs">52</text><text x="637" y="736" font-family="Liberation Mono" font-size="13" textLength="6" lengthAdjust="spacingAndGlyphs">5</text><text x="643" y="742" font-family="Liberation Mono" font-size="13" textLength="6" lengthAdjust="spacingAndGlyphs">2</text><text x="649" y="736" font-family="Liberation Mono" font-size="13" textLength="72" lengthAdjust="spacingAndGlyphs">ms #5(1): 60</text></svg>
</body></html>
